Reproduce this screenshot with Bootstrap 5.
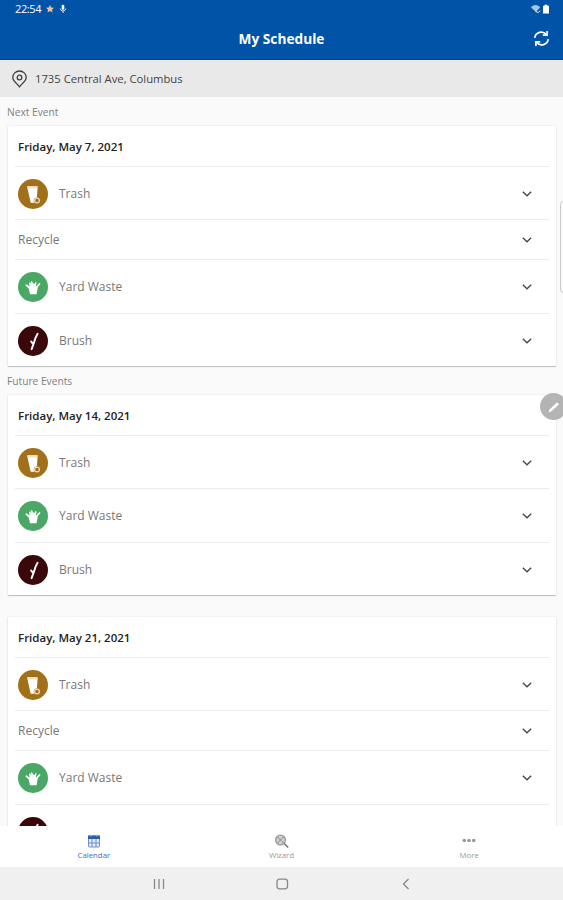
<!DOCTYPE html>
<html lang="en">
<head>
<meta charset="utf-8">
<meta name="viewport" content="width=device-width, initial-scale=1">
<title>My Schedule</title>
<link href="https://cdn.jsdelivr.net/npm/bootstrap@5.3.0/dist/css/bootstrap.min.css" rel="stylesheet">
<style>
body{font-family:"Open Sans","Noto Sans",sans-serif;font-size:12px;line-height:16px;background:#fafafa;color:#777}
.screen{height:900px}
.topbar{height:60px;background:#0053a6;border-bottom:1px solid #0046a0}
.status{height:18px;padding:0 13px 0 15px;font-size:11px;letter-spacing:-.4px}
.title-row{height:41px;padding:0 13px}
.title-row h1{font-size:13.7px;line-height:20px}
.title-row .side{width:17px}
.address{height:37px;background:#e9e9e9;color:#444;padding-left:11px;gap:7px;font-size:11.25px}
.section-label{height:29px;padding-left:7px;font-size:10.2px;color:#808080}
.event-card{margin:0 7px 0 8px;border-radius:1px;border:0;box-shadow:0 1px 1px #bbb,0 0 2px #ddd}
.event-card.spaced{margin-top:22px}
.event-row{height:53.5px;margin:0 7px;padding:1.8px 16px 0 3px;border-top:1px solid #ebebeb;gap:11px}
.event-row.plain{height:40px}
.event-date{height:39.5px;padding-left:10px;font-size:11.5px;font-weight:600;color:#222;padding-top:3px}
.disc{width:30px;height:30px}
.tabs{height:41px;font-size:7.8px;line-height:10px;color:#999;padding-top:8px}
.tabs span{margin-top:2px}
.tabs .active{color:#426db5}
.sysnav{height:33px;background:#f0f0f0;color:#777}
.edge-handle{right:-4px;top:201px;width:7px;height:92px;border:1px solid #c9c9c9;border-radius:4px;background:#fafafa}
.edit-dot{left:540px;top:393px;width:27px;height:27px;background:#b4b4b4}
svg{display:block;flex:none}
</style>
<script src="https://cdn.jsdelivr.net/npm/bootstrap@5.3.0/dist/js/bootstrap.bundle.min.js"></script>
</head>
<body>
<svg width="0" height="0" class="position-absolute" aria-hidden="true">
<symbol id="trash" viewBox="0 0 30 30"><circle cx="15" cy="15" r="15" fill="#a27019"/><path d="M9 7.2h10.700l-.8 11.200a3 3 0 0 0-2.200 5.300h-4z" fill="#fff"/><path d="M9 8.800h10.600" stroke="#d9c39c" stroke-width=".7"/><circle cx="19" cy="21.500" r="2.400" fill="#a27019" stroke="#ead8b9" stroke-width="1.300"/></symbol>
<symbol id="yard" viewBox="0 0 30 30"><circle cx="15" cy="15" r="15" fill="#4ba765"/><path d="M10.300 14.500h9.600l-1.300 7.800h-6.600z" fill="#fff"/><path d="m11 15.500-2.700-2.300M12.800 15l-1-3.600M15 14.500 13.600 10M16.500 14.500l1.300-3.500M18.800 15l2.700-3" stroke="#fff" stroke-width="1.700" stroke-linecap="round"/><circle cx="15" cy="14" r="2.600" fill="#fff"/></symbol>
<symbol id="brush" viewBox="0 0 30 30"><circle cx="15" cy="15" r="15" fill="#3a080b"/><path d="m19.600 7.800-2.200 4.300-1.500 4.800-2.300 6.300M15 18l-1.900-2.600" fill="none" stroke="#fff" stroke-width="1.900" stroke-linecap="round"/></symbol>
<symbol id="chev" viewBox="0 0 12 8"><path d="m1.800 1.800 4.200 4 4.200-4" fill="none" stroke="#444" stroke-width="1.300"/></symbol>
</svg>
<div class="screen position-relative overflow-hidden d-flex flex-column">
<header class="topbar text-white flex-shrink-0">
<div class="status d-flex align-items-center">
<span>22:54</span>
<svg class="ms-1" width="10" height="10" viewBox="0 0 10 10"><path d="m5 .8 1.200 2.600 2.800.3-2 2 .5 2.800L5 7.100 2.500 8.500 3 5.700l-2-2 2.800-.3z" fill="#f2bf9c"/></svg>
<svg class="ms-1" width="8" height="10" viewBox="0 0 8 10"><rect x="2.700" y=".7" width="2.600" height="5" rx="1.300" fill="#fff"/><path d="M1.200 4.500Q1.500 7 4 7t2.800-2.500M4 7v2" fill="none" stroke="#d5e4f5"/></svg>
<svg class="ms-auto" width="12" height="10" viewBox="0 0 12 10"><path d="M.8 3.200Q5.500-1 10.200 3.200L6 8z" fill="#a9c5e5"/><path d="M5.500 7.500q3 2.500 4.800-.8" fill="none" stroke="#dce8f6"/></svg>
<svg width="8" height="10" viewBox="0 0 8 10"><path d="M2.500.7h3v1h1.500v7.800H1V1.700h1.500z" fill="#fff"/></svg>
</div>
<div class="title-row d-flex align-items-center justify-content-between">
<span class="side"></span>
<h1 class="fw-bold m-0">My Schedule</h1>
<svg width="17" height="17" viewBox="0 0 17 17" fill="none" stroke="#fff" stroke-width="1.700"><path d="M1.700 7.800A6.600 6.600 0 0 1 13.300 4.500M15.300 9.200A6.600 6.600 0 0 1 3.700 12.500"/><path d="M14.100 1v4.200H9.800M2.900 16v-4.200h4.300"/></svg>
</div>
</header>
<div class="address d-flex align-items-center flex-shrink-0">
<svg width="17" height="18" viewBox="0 0 17 18" fill="none" stroke="#3f3f3f" stroke-width="1.300"><path d="M8.500 16.800C6 13.700 1.800 10.800 1.800 7.400a6.700 6.400 0 0 1 13.400 0c0 3.400-4.200 6.300-6.700 9.400z"/><circle cx="8.500" cy="7.500" r="2.300"/></svg>
<span>1735 Central Ave, Columbus</span>
</div>
<main class="flex-grow-1 overflow-hidden">
<div class="section-label d-flex align-items-center">Next Event</div>
<section class="card event-card">
<div class="event-date d-flex align-items-center">Friday, May 7, 2021</div>
<div class="event-row d-flex align-items-center"><svg class="disc"><use href="#trash"/></svg><span>Trash</span><svg class="ms-auto" width="12" height="8"><use href="#chev"/></svg></div>
<div class="event-row plain d-flex align-items-center"><span>Recycle</span><svg class="ms-auto" width="12" height="8"><use href="#chev"/></svg></div>
<div class="event-row d-flex align-items-center"><svg class="disc"><use href="#yard"/></svg><span>Yard Waste</span><svg class="ms-auto" width="12" height="8"><use href="#chev"/></svg></div>
<div class="event-row d-flex align-items-center"><svg class="disc"><use href="#brush"/></svg><span>Brush</span><svg class="ms-auto" width="12" height="8"><use href="#chev"/></svg></div>
</section>
<div class="section-label d-flex align-items-center">Future Events</div>
<section class="card event-card">
<div class="event-date d-flex align-items-center">Friday, May 14, 2021</div>
<div class="event-row d-flex align-items-center"><svg class="disc"><use href="#trash"/></svg><span>Trash</span><svg class="ms-auto" width="12" height="8"><use href="#chev"/></svg></div>
<div class="event-row d-flex align-items-center"><svg class="disc"><use href="#yard"/></svg><span>Yard Waste</span><svg class="ms-auto" width="12" height="8"><use href="#chev"/></svg></div>
<div class="event-row d-flex align-items-center"><svg class="disc"><use href="#brush"/></svg><span>Brush</span><svg class="ms-auto" width="12" height="8"><use href="#chev"/></svg></div>
</section>
<section class="card event-card spaced">
<div class="event-date d-flex align-items-center">Friday, May 21, 2021</div>
<div class="event-row d-flex align-items-center"><svg class="disc"><use href="#trash"/></svg><span>Trash</span><svg class="ms-auto" width="12" height="8"><use href="#chev"/></svg></div>
<div class="event-row plain d-flex align-items-center"><span>Recycle</span><svg class="ms-auto" width="12" height="8"><use href="#chev"/></svg></div>
<div class="event-row d-flex align-items-center"><svg class="disc"><use href="#yard"/></svg><span>Yard Waste</span><svg class="ms-auto" width="12" height="8"><use href="#chev"/></svg></div>
<div class="event-row d-flex align-items-center"><svg class="disc"><use href="#brush"/></svg></div>
</section>
</main>
<nav class="tabs row g-0 bg-white flex-shrink-0 text-center">
<div class="col active d-flex flex-column align-items-center"><svg width="14" height="14" viewBox="0 0 14 14"><rect x="1.500" y="2" width="11" height="11" rx="1" fill="#e4ebf6" stroke="#6f8fc5"/><path d="M1 1.500h12V5H1z" fill="#2d5cab"/><path d="M4 .5v2M10 .5v2" stroke="#b9cae6"/><path d="M1.500 9h11M5 5v8M9 5v8" stroke="#6f8fc5"/></svg><span>Calendar</span></div>
<div class="col d-flex flex-column align-items-center"><svg width="15" height="14" viewBox="0 0 15 14"><circle cx="6.500" cy="6" r="4.900" fill="#d0d0d0" stroke="#999" stroke-width="1.300"/><path d="m3.500 3 6 6M9.500 3l-6 6" stroke="#888"/><path d="m10.200 9.500 4 4" stroke="#777" stroke-width="1.600"/></svg><span>Wizard</span></div>
<div class="col d-flex flex-column align-items-center"><svg width="14" height="14" viewBox="0 0 14 14" fill="#999"><circle cx="2.300" cy="6.500" r="1.800"/><circle cx="7" cy="6.500" r="1.800"/><circle cx="11.700" cy="6.500" r="1.800"/></svg><span>More</span></div>
</nav>
<div class="sysnav d-flex align-items-center justify-content-center flex-shrink-0">
<svg width="260" height="14" viewBox="0 0 260 14" fill="none" stroke="#888" stroke-width="1.300"><path d="M2.500 2v10M7 2v10M11.500 2v10"/><rect x="125" y="2.200" width="10.500" height="9.600" rx="2.500"/><path d="m256.500 2-5 5 5 5"/></svg>
</div>
<div class="edge-handle position-absolute"></div>
<div class="edit-dot position-absolute rounded-circle d-flex align-items-center justify-content-center"><svg width="14" height="14" viewBox="0 0 14 14"><path d="m1.500 12.500 1-3 7.500-7 2 1.800-7.500 7z" fill="#fff"/></svg></div>
</div>
</body>
</html>
